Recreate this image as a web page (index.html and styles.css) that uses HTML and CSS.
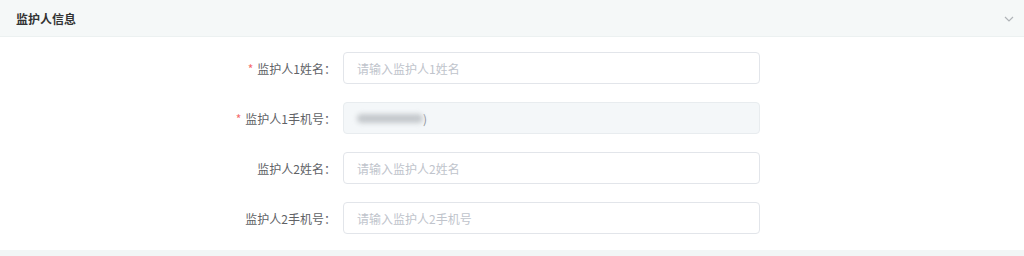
FILE: index.html
```html
<!DOCTYPE html>
<html lang="zh">
<head>
<meta charset="utf-8">
<link rel="stylesheet" href="styles.css">
</head>
<body>
<div class="panel">
  <div class="panel-header">
    <span class="panel-title">监护人信息</span>
    <svg class="chevron" width="10" height="6" viewBox="0 0 10 6"><path d="M1 1 L5 5 L9 1" fill="none" stroke="#b0b4b8" stroke-width="1.2"/></svg>
  </div>
  <div class="form">
    <div class="form-item">
      <label class="form-label"><span class="req">*</span>监护人1姓名：</label>
      <div class="input"><span class="placeholder">请输入监护人1姓名</span></div>
    </div>
    <div class="form-item">
      <label class="form-label"><span class="req">*</span>监护人1手机号：</label>
      <div class="input disabled"><span class="blur"></span><span class="value">)</span></div>
    </div>
    <div class="form-item">
      <label class="form-label">监护人2姓名：</label>
      <div class="input"><span class="placeholder">请输入监护人2姓名</span></div>
    </div>
    <div class="form-item">
      <label class="form-label">监护人2手机号：</label>
      <div class="input"><span class="placeholder">请输入监护人2手机号</span></div>
    </div>
  </div>
  <div class="next-band"></div>
</div>
</body>
</html>
```
FILE: styles.css
```css
* { box-sizing: border-box; }
body {
  margin: 0;
  background: #fff;
  font-family: "Noto Sans CJK SC", "Liberation Sans", sans-serif;
  font-size: 12px;
  color: #606266;
}
.panel { width: 1024px; height: 256px; display: flex; flex-direction: column; }
.panel-header {
  height: 37px;
  background: #f5f8f8;
  border-bottom: 1px solid #ecf1f1;
  display: flex;
  align-items: center;
  justify-content: space-between;
  padding: 0 10px 0 16px;
}
.panel-title { font-size: 12px; font-weight: bold; color: #333; }
.chevron { display: block; margin-top: 2px; }
.form {
  padding-top: 15px;
  display: flex;
  flex-direction: column;
  gap: 18px;
  flex: 1;
}
.form-item { display: flex; align-items: center; height: 32px; }
.form-label {
  width: 343px;
  padding-right: 7px;
  text-align: right;
  color: #606266;
  font-size: 12px;
}
.req { color: #f56c6c; margin-right: 4px; }
.input {
  width: 417px;
  height: 32px;
  border: 1px solid #e2e5ea;
  border-radius: 4px;
  padding: 0 14px 0 13px;
  display: flex;
  align-items: center;
  background: #fff;
}
.input.disabled { background: #f4f7f9; border-color: #e8ecef; }
.placeholder { color: #c0c4cc; }
.blur {
  display: inline-block;
  width: 66px;
  height: 9px;
  background: #c4c8cc;
  border-radius: 5px;
  filter: blur(2.5px);
}
.value { color: #909399; margin-left: 0; }
.next-band { height: 6px; background: #f2f6f6; }
```
